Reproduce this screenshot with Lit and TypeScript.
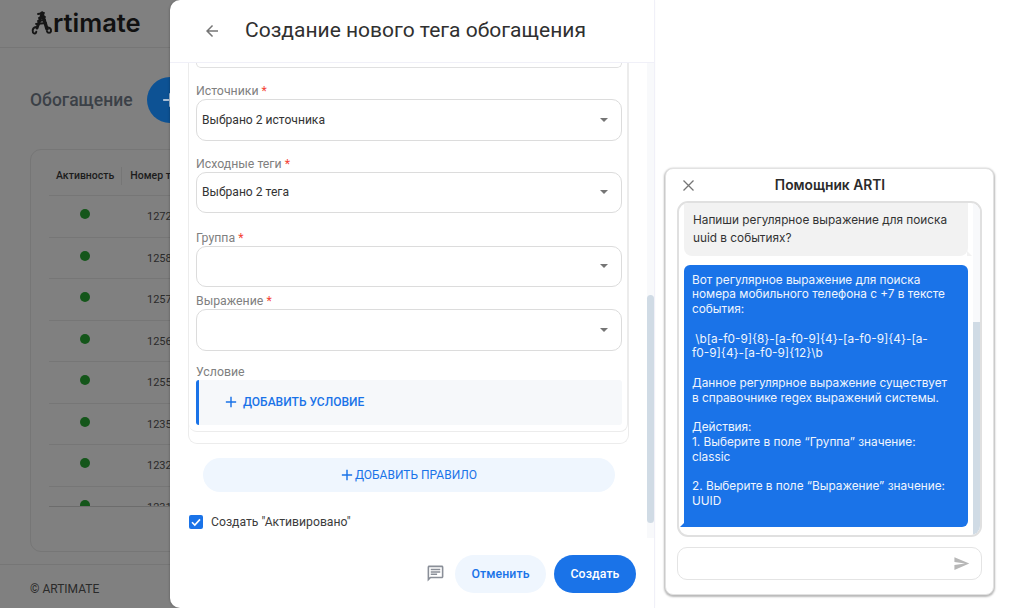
import { LitElement, html, css, svg } from "lit";
import { customElement } from "lit/decorators.js";

const ROWS = ["1272", "1258", "1257", "1256", "1255", "1235", "1232", "1231"];

const plus = (size: number) => html`<svg class="plus" width=${size} height=${size} viewBox="0 0 14 14"><path d="M7 1v12M1 7h12" fill="none" stroke="currentColor" stroke-width="1.7"/></svg>`;

const caret = html`<svg class="caret" width="8" height="4" viewBox="0 0 8 4"><path d="M0 0h8L4 4z" fill="#757575"/></svg>`;

const logoA = svg`<g fill="none" stroke="#161616" stroke-linecap="round">
  <path d="M11 3 6 17" stroke-width="3" stroke-dasharray="2.500 .7"/>
  <path d="M11 2l5 16" stroke-width="3.400" stroke-dasharray="3 .7"/>
  <path d="M7 3l6-1M8 7l6-1M7 10l7-1M5 13l10-1" stroke-width="1.800"/>
  <path d="M6 16C2.500 15.500 .8 19 2 21.500c1 1.700 3.500 1 3.300-.8" stroke-width="2"/>
  <path d="M15 17c3-1.500 5.500.8 5 3.200-.5 2.200-3.500 2.200-4 0" stroke-width="2"/>
</g>`;

@customElement("app-root")
export class AppRoot extends LitElement {
  static styles = css`
    :host { display: block; width: 1024px; height: 608px; overflow: hidden; background: #fff; font-family: Roboto, "Noto Sans", sans-serif; }
    * { box-sizing: border-box; }
    .app { display: flex; width: 1024px; height: 608px; }

    .page { flex: 0 0 181px; width: 181px; height: 608px; background: #808080; display: flex; flex-direction: column; overflow: hidden; }
    .top { flex: 0 0 48px; border-bottom: 1px solid #767676; padding: 7px 0 0 30px; display: flex; align-items: flex-start; }
    .logo { display: flex; align-items: center; height: 32px; font: 600 25.500px/32px Inter, sans-serif; color: #111; }
    .heading { display: flex; align-items: center; height: 46px; margin: 29px 0 0 30px; gap: 14px; width: 200px; flex: none; }
    .heading h1 { margin: 0; font: 500 17.500px/24px Roboto, sans-serif; color: #3b4047; white-space: nowrap; }
    .fab { flex: none; width: 46px; height: 46px; border-radius: 50%; background: #0d5294; color: #a9bfd6; display: flex; align-items: center; justify-content: center; }
    .card { margin: 26px 0 0 30px; width: 220px; height: 403px; flex: none; border: 1px solid #767676; border-radius: 11px; padding: 0 0 0 18px; }
    .thead { height: 46px; display: flex; align-items: center; padding: 6px 0 0 7px; border-bottom: 1px solid #767676; font: 500 10.500px/14px Roboto, sans-serif; color: #1c1c1c; white-space: nowrap; }
    .thead i { width: 1px; height: 18px; background: #767676; margin: 0 8px 0 7px; }
    .rows { height: 311px; overflow: hidden; border-bottom: 1px solid #6c6c6c; }
    .row { height: 41.500px; border-bottom: 1px solid #767676; display: flex; align-items: center; }
    .dot { width: 10px; height: 10px; border-radius: 50%; background: #14561a; margin: -4px 0 0 31px; }
    .num { margin: 2px 0 0 57px; font: 400 11px/14px Roboto, sans-serif; color: #2a2a2a; }
    .foot { margin-top: 12px; border-top: 1px solid #767676; padding: 16px 0 0 30px; font: 400 12px/16px Roboto, sans-serif; color: #2a2a2a; }

    .drawer { flex: 0 0 485px; margin-left: -11px; position: relative; z-index: 1; height: 608px; background: #fff; border-radius: 10px 0 0 10px; border-right: 1px solid #f0f0f8; display: flex; flex-direction: column; box-shadow: -1px 0 2px rgba(0,0,0,.15); }
    .dhead { flex: 0 0 63px; border-bottom: 1px solid #f0f0f8; display: flex; align-items: center; padding: 0 0 1px 33px; gap: 24px; }
    .dhead h2 { margin: 0 0 2px; font: 400 21px/28px Roboto, sans-serif; color: #303030; white-space: nowrap; }
    .dbody { flex: 0 0 475px; display: flex; overflow: hidden; }
    .content { flex: 0 0 477px; padding: 0 0 0 18px; }
    .track { flex: 0 0 7px; background: #f8f9fb; padding-top: 232px; }
    .thumb { height: 228px; background: #d0dbe5; border-radius: 4px; }
    .outer { width: 441px; height: 381px; border: 1px solid #ececec; border-top: 0; border-radius: 0 0 9px 9px; }
    .inner { width: 439px; height: 369px; border: 1px solid #ececec; border-top: 0; border-left: 0; border-radius: 0 0 8px 8px; padding: 0 5px 0 7px; }
    .stub { height: 5px; border: 1px solid #e0e0e0; border-top: 0; border-radius: 0 0 10px 10px; margin-bottom: 15px; }
    .field { margin-bottom: 15px; }
    .field.wide { margin-bottom: 16.500px; }
    .field.tight { margin-bottom: 6px; }
    .field.last { margin-bottom: 13.500px; }
    .label { font: 400 12.300px/16px Roboto, sans-serif; color: #808080; height: 16px; white-space: nowrap; }
    .label b { color: #f44336; font-weight: 400; }
    .select { height: 41.500px; border: 1px solid #dcdcdc; border-radius: 10px; display: flex; align-items: center; padding: 0 13px 0 5px; font: 400 12.100px/16px Roboto, sans-serif; color: #333; }
    .caret { margin-left: auto; }
    .field.cond { margin: 0; }
    .cond-box { height: 44.500px; background: #f6f8fa; border-left: 3px solid #1a73e8; border-radius: 3px; display: flex; align-items: center; padding-left: 26px; gap: 6px; color: #1a73e8; font: 500 12px/16px Roboto, sans-serif; }
    .addrule { margin: 14px 0 0 15px; width: 412px; height: 34px; border-radius: 17px; background: #eff6fe; color: #1a73e8; display: flex; align-items: center; justify-content: center; gap: 2px; font: 400 12px/16px Roboto, sans-serif; }
    .check { margin: 22px 0 0 1px; display: flex; align-items: center; gap: 8px; font: 400 12.200px/16px Roboto, sans-serif; color: #3c3c3c; }
    .box { width: 14px; height: 14px; border-radius: 2px; background: #1a73e8; display: flex; align-items: center; justify-content: center; }
    .dfoot { flex: 1; display: flex; align-items: flex-start; justify-content: flex-end; padding: 17px 18px 0 0; }
    .chatico { margin: 9px 10px 0 0; }
    .btn { height: 38px; border-radius: 19px; display: flex; align-items: center; justify-content: center; font: 500 12.300px/16px Roboto, sans-serif; letter-spacing: .1px; }
    .cancel { width: 91px; background: #eff6fe; color: #1a73e8; margin-right: 8px; }
    .create { width: 82px; background: #1a73e8; color: #fff; }

    .right { flex: 1; padding: 168px 0 0 10px; }
    .chat { width: 329px; height: 427px; background: #fff; border: 1px solid #e2e2e2; border-radius: 8px; box-shadow: 0 1px 2px 1px rgba(0,0,0,.28); padding: 0 10px 0 11px; display: flex; flex-direction: column; }
    .chead { flex: 0 0 32px; display: flex; align-items: center; justify-content: center; position: relative; font: 600 13.800px/18px Inter, sans-serif; color: #2b2b2b; }
    .close { position: absolute; left: 5px; top: 10px; }
    .msgs { flex: 0 0 336px; border: 2px solid #e0e0e0; border-radius: 11px; display: flex; overflow: hidden; width: 305px; }
    .list { flex: 0 0 294px; padding: 0 0 0 5px; font: 400 11.800px/14.780px Inter, sans-serif; }
    .sb { flex: 0 0 7px; background: #f8f9fb; padding-top: 119px; }
    .sb div { height: 216px; background: #d0dbe5; }
    .m { position: relative; width: 284px; white-space: pre-wrap; }
    .user { height: 53px; background: #f2f2f2; color: #333; border-radius: 0 0 8px 8px; padding: 8px 8px 0 9px; line-height: 18px; }
    .user::after { content: ""; position: absolute; right: -4px; bottom: 0; border-style: solid; border-width: 5px 0 0 5px; border-color: transparent transparent transparent #f2f2f2; }
    .bot { margin-top: 9px; height: 262px; background: #1a73e8; color: #f0f5fd; border-radius: 6px; border-bottom-left-radius: 0; padding: 7.500px 8px 0 8px; }
    .bot::after { content: ""; position: absolute; left: -4px; bottom: 0; border-style: solid; border-width: 0 0 5px 5px; border-color: transparent transparent #1a73e8 transparent; }
    .input { margin-top: 10px; width: 305px; height: 33px; border: 1px solid #e4e4e4; border-radius: 10px; display: flex; align-items: center; justify-content: flex-end; padding-right: 11px; }
  `;

  render() {
    return html`
      <div class="app">
        <section class="page">
          <div class="top">
            <div class="logo"><svg width="23" height="24" viewBox="0 0 21 24">${logoA}</svg>rtimate</div>
          </div>
          <div class="heading"><h1>Обогащение</h1><div class="fab">${plus(16)}</div></div>
          <div class="card">
            <div class="thead">Активность<i></i>Номер тега</div>
            <div class="rows">
              ${ROWS.map((n) => html`<div class="row"><span class="dot"></span><span class="num">${n}</span></div>`)}
            </div>
          </div>
          <div class="foot">© ARTIMATE</div>
        </section>

        <section class="drawer">
          <header class="dhead">
            <svg width="18" height="18" viewBox="0 0 24 24"><path d="M20 11H7.830l5.590-5.590L12 4l-8 8 8 8 1.410-1.410L7.830 13H20v-2z" fill="#757575"/></svg>
            <h2>Создание нового тега обогащения</h2>
          </header>
          <div class="dbody">
            <div class="content">
              <div class="outer"><div class="inner">
                <div class="stub"></div>
                <div class="field"><div class="label">Источники <b>*</b></div><div class="select">Выбрано 2 источника${caret}</div></div>
                <div class="field wide"><div class="label">Исходные теги <b>*</b></div><div class="select">Выбрано 2 тега${caret}</div></div>
                <div class="field tight"><div class="label">Группа <b>*</b></div><div class="select">${caret}</div></div>
                <div class="field last"><div class="label">Выражение <b>*</b></div><div class="select">${caret}</div></div>
                <div class="field cond"><div class="label">Условие</div><div class="cond-box">${plus(12)}ДОБАВИТЬ УСЛОВИЕ</div></div>
              </div></div>
              <div class="addrule">${plus(12)}ДОБАВИТЬ ПРАВИЛО</div>
              <div class="check"><span class="box"><svg width="12" height="12" viewBox="0 0 12 12"><path d="M2 6.200 4.800 9 10 3.400" fill="none" stroke="#fff" stroke-width="1.600"/></svg></span>Создать "Активировано"</div>
            </div>
            <div class="track"><div class="thumb"></div></div>
          </div>
          <footer class="dfoot">
            <svg class="chatico" width="19" height="19" viewBox="0 0 24 24"><path d="M20 2H4c-1.100 0-2 .9-2 2v18l4-4h14c1.100 0 2-.9 2-2V4c0-1.100-.9-2-2-2zm0 14H5.170L4 17.170V4h16v12z" fill="#8a8f98"/><path d="M6 12h8v2H6zM6 9h12v2H6zM6 6h12v2H6z" fill="#8a8f98"/></svg>
            <div class="btn cancel">Отменить</div>
            <div class="btn create">Создать</div>
          </footer>
        </section>

        <section class="right">
          <div class="chat">
            <div class="chead">
              <svg class="close" width="13" height="13" viewBox="0 0 13 13"><path d="M1.500 1.500l10 10M11.500 1.500l-10 10" stroke="#757575" stroke-width="1.300" fill="none"/></svg>
              Помощник ARTI
            </div>
            <div class="msgs">
              <div class="list">
                <div class="m user">Напиши регулярное выражение для поиска
uuid в событиях?</div>
                <div class="m bot">Вот регулярное выражение для поиска
номера мобильного телефона с +7 в тексте
события:

 \\b[a-f0-9]{8}-[a-f0-9]{4}-[a-f0-9]{4}-[a-
f0-9]{4}-[a-f0-9]{12}\\b

Данное регулярное выражение существует
в справочнике regex выражений системы.

Действия:
1. Выберите в поле “Группа” значение:
classic

2. Выберите в поле “Выражение” значение:
UUID</div>
              </div>
              <div class="sb"><div></div></div>
            </div>
            <div class="input"><svg width="17" height="17" viewBox="0 0 24 24"><path d="M2.010 21 23 12 2.010 3 2 10l15 2-15 2z" fill="#b7b7b7"/></svg></div>
          </div>
        </section>
      </div>
    `;
  }
}
